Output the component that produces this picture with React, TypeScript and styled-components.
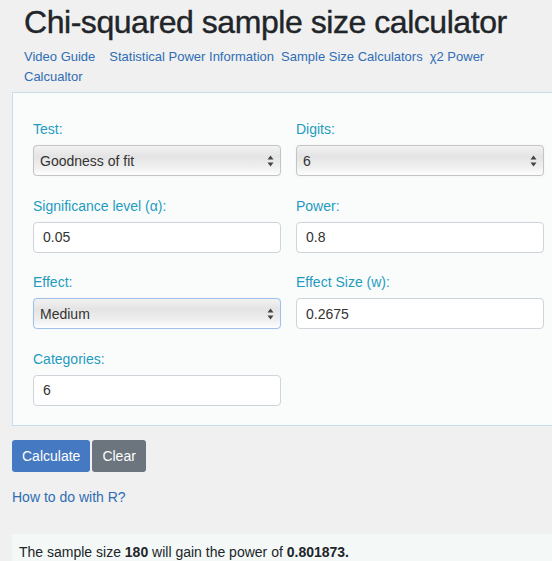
import React from "react";
import styled, { createGlobalStyle } from "styled-components";

const GlobalStyle = createGlobalStyle`
	html, body {
		margin: 0;
		padding: 0;
		background: #f0f0f0;
		overflow: hidden;
	}
	body {
		font-family: "Liberation Sans", Arial, sans-serif;
		color: #212529;
	}
`;

const SPage = styled.div`
	padding: 0 0 0 12px;
	width: 560px;
`;

const STitle = styled.h1`
	margin: 0;
	padding: 2px 0 0 12px;
	font-size: 32px;
	letter-spacing: -0.45px;
	font-weight: 400;
	line-height: 40px;
	color: #212529;
	-webkit-text-stroke: 0.4px #212529;
`;

const SLinks = styled.nav`
	padding: 5px 0 0 12px;
	font-size: 13px;
	line-height: 20px;
	width: 520px;
	a {
		color: #2f6db5;
		text-decoration: none;
		margin-right: 7px;
		&:first-child {
			margin-right: 14px;
		}
	}
`;

const SPanel = styled.section`
	margin-top: 5px;
	background: #fafcfc;
	border: 1px solid #c9dcec;
	padding: 26px 20px 19px 20px;
`;

const SGrid = styled.div`
	display: grid;
	grid-template-columns: 248px 248px;
	column-gap: 15px;
	row-gap: 19.5px;
`;

const SField = styled.div`
	display: flex;
	flex-direction: column;
	gap: 6px;
`;

const SLabel = styled.label`
	font-size: 14px;
	line-height: 20px;
	color: #1f9bbd;
`;

const SInput = styled.div`
	box-sizing: border-box;
	height: 31px;
	border: 1px solid #ced4da;
	border-radius: 4px;
	background: #fff;
	padding: 0 9px;
	display: flex;
	align-items: center;
	font-size: 14px;
	color: #333;
`;

const SSelect = styled.div<{ $focused?: boolean }>`
	box-sizing: border-box;
	height: 31px;
	border: 1px solid ${(p) => (p.$focused ? "#9dc1ea" : "#c4c4c4")};
	border-radius: 4px;
	background: linear-gradient(#f2f2f2 0%, #e4e4e4 35%, #efefef 72%, #fefefe 100%);
	box-shadow: 0 0 1px rgba(0, 0, 0, 0.15);
	padding: 0 6px;
	display: flex;
	align-items: center;
	justify-content: space-between;
	font-size: 14px;
	color: #333;
`;

const Arrows = () => (
	<svg width="7" height="12" viewBox="0 0 7 12">
		<path d="M3.5 0.5 L6.5 4.5 H0.5 Z" fill="#444" />
		<path d="M3.5 11.5 L6.5 7.5 H0.5 Z" fill="#444" />
	</svg>
);

const SActions = styled.div`
	display: flex;
	gap: 2px;
	margin-top: 14px;
`;

const SButton = styled.button<{ $variant: "primary" | "secondary" }>`
	height: 32px;
	border: none;
	border-radius: 3px;
	padding: 0 10px;
	font-family: inherit;
	font-size: 14px;
	color: #fff;
	background: ${(p) => (p.$variant === "primary" ? "#4579c1" : "#6c757d")};
`;

const SHelp = styled.a`
	display: block;
	margin-top: 15px;
	font-size: 14px;
	line-height: 20px;
	color: #2f6db5;
	text-decoration: none;
`;

const SResult = styled.div`
	margin-top: 27px;
	background: #f4f9f8;
	padding: 8px 7px;
	font-size: 14px;
	line-height: 20px;
	color: #212529;
	height: 40px;
`;

type Field =
	| { label: string; kind: "select"; value: string; focused?: boolean }
	| { label: string; kind: "input"; value: string };

const fields: Field[] = [
	{ label: "Test:", kind: "select", value: "Goodness of fit" },
	{ label: "Digits:", kind: "select", value: "6" },
	{ label: "Significance level (α):", kind: "input", value: "0.05" },
	{ label: "Power:", kind: "input", value: "0.8" },
	{ label: "Effect:", kind: "select", value: "Medium", focused: true },
	{ label: "Effect Size (w):", kind: "input", value: "0.2675" },
	{ label: "Categories:", kind: "input", value: "6" },
];

export default function App() {
	return (
		<>
			<GlobalStyle />
			<SPage>
				<STitle>Chi-squared sample size calculator</STitle>
				<SLinks>
					<a href="#">Video Guide</a>
					<a href="#">Statistical Power Information</a>
					<a href="#">Sample Size Calculators</a>
					<a href="#">χ2 Power Calcualtor</a>
				</SLinks>
				<SPanel>
					<SGrid>
						{fields.map((f) => (
							<SField key={f.label}>
								<SLabel>{f.label}</SLabel>
								{f.kind === "select" ? (
									<SSelect $focused={f.focused}>
										<span>{f.value}</span>
										<Arrows />
									</SSelect>
								) : (
									<SInput>{f.value}</SInput>
								)}
							</SField>
						))}
					</SGrid>
				</SPanel>
				<SActions>
					<SButton $variant="primary">Calculate</SButton>
					<SButton $variant="secondary">Clear</SButton>
				</SActions>
				<SHelp href="#">How to do with R?</SHelp>
				<SResult>
					The sample size <b>180</b> will gain the power of <b>0.801873.</b>
				</SResult>
			</SPage>
		</>
	);
}
